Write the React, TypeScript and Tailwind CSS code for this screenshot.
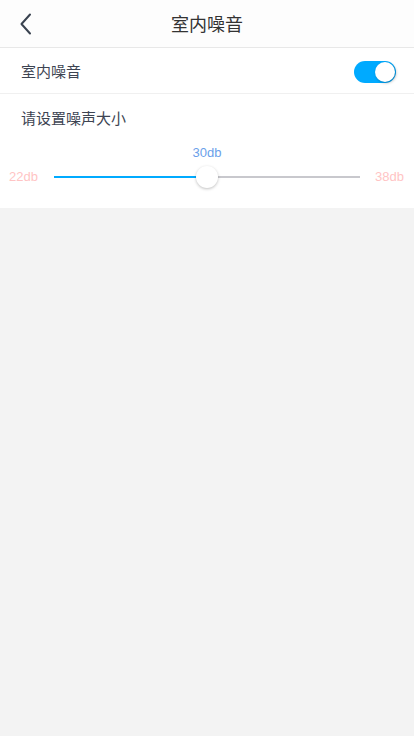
import React from 'react';

const font = { fontFamily: '"Noto Sans CJK SC", "Liberation Sans", sans-serif' };

export default function App() {
  return (
    <div className="min-h-[736px] w-full bg-[#f3f3f3]" style={font}>
      <header className="relative flex h-[48px] items-center justify-center border-b border-[#e8e8e8] bg-[#fdfdfd]">
        <button className="absolute left-[14px] top-[12px] flex h-6 w-6 items-center justify-center" aria-label="back">
          <svg width="14" height="22" viewBox="0 0 14 22" fill="none">
            <path d="M11 1.5 L2.5 11 L11 20.5" stroke="#3a4350" strokeWidth="2" strokeLinecap="round" strokeLinejoin="round" />
          </svg>
        </button>
        <h1 className="text-[18px] text-[#333]">室内噪音</h1>
      </header>

      <div className="bg-white">
        <div className="flex h-[46px] items-center justify-between border-b border-[#f0f0f0] pl-[21px] pr-[18px] pt-[2px]">
          <span className="text-[15px] text-[#3d4452]">室内噪音</span>
          <div className="relative h-[22px] w-[42px] rounded-full bg-[#00aaff]">
            <div className="absolute right-[1px] top-[1px] h-[20px] w-[20px] rounded-full bg-white shadow-[1px_1px_3px_rgba(0,0,0,0.3)]" />
          </div>
        </div>

        <div className="pb-[19px]">
          <div className="pl-[21px] pt-[13px] text-[15px] leading-[22px] text-[#3d4452]">请设置噪声大小</div>
          <div className="mt-[16px] text-center text-[13px] leading-[16px] text-[#6b9fea]" style={{ fontFamily: '"Liberation Sans", sans-serif' }}>
            30db
          </div>
          <div className="mt-[4px] flex h-[24px] items-center" style={{ fontFamily: '"Liberation Sans", sans-serif' }}>
            <span className="w-[54px] pl-[9px] text-[13px] text-[#ffc4c4]">22db</span>
            <div className="relative flex h-[24px] flex-1 items-center">
              <div className="h-[2px] w-[146px] bg-[#00aaff]" />
              <div className="h-[2px] flex-1 bg-[#c8c8cd]" />
              <div className="absolute left-[142px] top-[1px] h-[22px] w-[22px] rounded-full bg-white shadow-[0_1px_3px_rgba(0,0,0,0.25)]" />
            </div>
            <span className="w-[54px] pr-[10px] text-right text-[13px] text-[#ffc4c4]">38db</span>
          </div>
        </div>
      </div>
    </div>
  );
}
